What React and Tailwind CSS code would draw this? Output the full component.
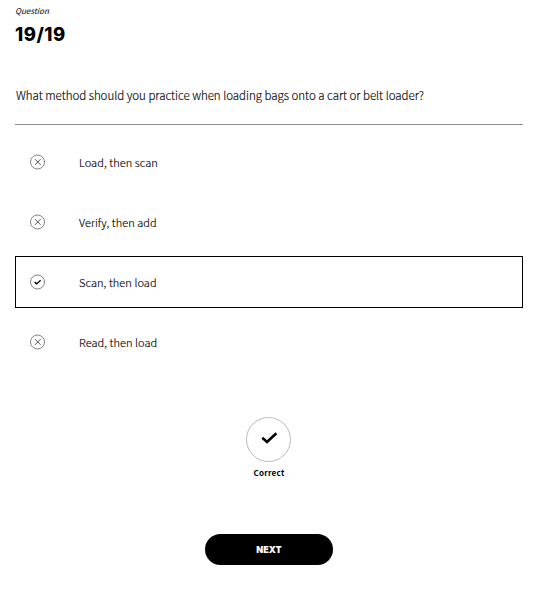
const options = [
  { text: 'Load, then scan', correct: false },
  { text: 'Verify, then add', correct: false },
  { text: 'Scan, then load', correct: true },
  { text: 'Read, then load', correct: false },
];

function OptionIcon({ correct }) {
  return (
    <svg className="size-4 shrink-0" viewBox="0 0 16 16" fill="none">
      <circle cx="7.5" cy="8" r="7" stroke="#808080" strokeWidth="1" />
      {correct ? (
        <path d="M4.6 8.1 6.7 9.9 10.6 6.3" stroke="#000" strokeWidth="1.4" />
      ) : (
        <path d="M5 5.2 10.6 10.8M10.6 5.2 5 10.8" stroke="#555" strokeWidth="1" />
      )}
    </svg>
  );
}

export default function App() {
  return (
    <main className="h-[598px] w-[553px] overflow-hidden bg-white pl-[15px] pr-[30px] text-black">
      <div className="flex h-[124px] flex-col">
        <p className="mt-[5px] h-3 font-['Noto_Sans_CJK_SC',sans-serif] text-[8px] font-medium italic leading-3 tracking-[-0.1px] text-[#333]">Question</p>
        <h1 className="mt-[7px] h-5 font-['Inter',sans-serif] text-[18.5px] font-extrabold leading-5 tracking-[0.5px]">19/19</h1>
        <p className="mt-[41px] h-5 whitespace-nowrap pl-px font-['Noto_Sans_CJK_SC',sans-serif] text-[11.5px] font-light leading-5 tracking-[-0.02px] text-black [-webkit-text-stroke:0.15px_#000]">
          What method should you practice when loading bags onto a cart or belt loader?
        </p>
      </div>
      <hr className="h-px border-0 bg-[#8c8c8c]" />
      <ul className="mt-[11px] flex flex-col gap-2">
        {options.map((o) => (
          <li
            key={o.text}
            className={`flex h-[52px] items-center border pl-[14px] ${o.correct ? 'border-black' : 'border-transparent'}`}
          >
            <OptionIcon correct={o.correct} />
            <span className="ml-[33px] font-['Noto_Sans_CJK_SC',sans-serif] text-[11px] font-light leading-5 tracking-[0.07px] text-black [-webkit-text-stroke:0.15px_#000]">{o.text}</span>
          </li>
        ))}
      </ul>
      <div className="mt-[49px] flex flex-col items-center">
        <svg className="mr-px size-[45px]" viewBox="0 0 45 45" fill="none">
          <circle cx="22.5" cy="22.5" r="22" stroke="#bbb" />
          <path d="M16.3 20.7 21 24.9 30.4 16.2" stroke="#000" strokeWidth="2.6" />
        </svg>
        <p className="mt-[5px] h-3 font-['Noto_Sans_CJK_SC',sans-serif] text-[8px] font-bold leading-3 tracking-[0.25px]">Correct</p>
        <button className="mt-[55px] h-[31px] w-32 rounded-full bg-black font-['Inter',sans-serif] text-[9px] font-black leading-[32px] text-white">
          NEXT
        </button>
      </div>
    </main>
  );
}
